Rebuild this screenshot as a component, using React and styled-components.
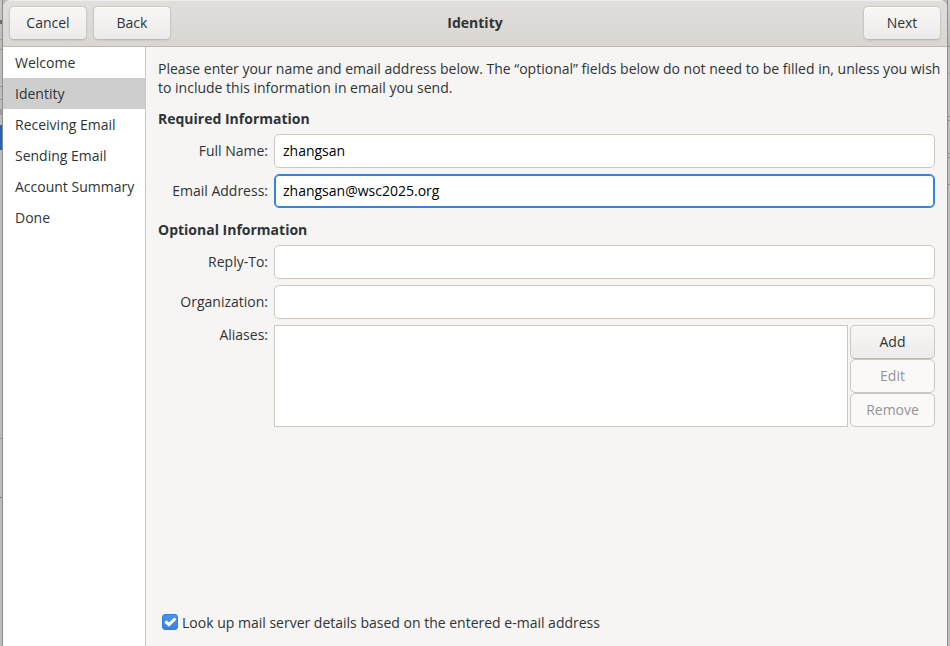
import React, { useState } from "react";
import styled, { createGlobalStyle, css } from "styled-components";

const GlobalStyle = createGlobalStyle`
  *, *::before, *::after { box-sizing: border-box; }
  body {
    margin: 0;
    color: #2e3436;
    font: 14px/19px "Open Sans", "Noto Sans", sans-serif;
  }
  button, input, textarea { font: inherit; color: inherit; }
`;

const Desktop = styled.div`
  display: grid;
  grid-template-columns: 3px minmax(0, 1fr) 3px;
  min-height: 100vh;
  background: #bdbcba;
`;

const mark = (y, color, h = 1) =>
  `linear-gradient(${color}, ${color}) 0 ${y}px / 100% ${h}px no-repeat`;

const LeftEdge = styled.div`
  background:
    linear-gradient(90deg, transparent 2px, #8f8e8d 2px),
    ${mark(20, "#6d6d6c", 4)},
    ${mark(39, "#a5a4a2")},
    ${mark(49, "#8e8d8b")},
    ${mark(86, "#9c9b99")},
    ${mark(99, "#9c9b99")},
    ${mark(109, "#9c9b99", 6)},
    ${mark(125, "#2263b5", 25)},
    ${mark(438, "#969593")},
    ${mark(497, "#7f7e7d")},
    linear-gradient(#c8c7c6, #bdbcbb 40px);
`;

const RightEdge = styled.div`
  background:
    linear-gradient(90deg, #8f8e8d 1px, transparent 1px),
    ${mark(46, "#969593")},
    ${mark(73, "#a3a2a0")},
    ${mark(116, "#8e8d8b")},
    ${mark(120, "#8e8d8b")},
    ${mark(153, "#8e8d8b")},
    ${mark(157, "#8e8d8b")},
    ${mark(184, "#8e8d8b")},
    linear-gradient(#d0cfce, #bdbcbb 40px);
`;

const Window = styled.div`
  display: flex;
  flex-direction: column;
  background: #f6f5f4;
  border-radius: 8px 8px 0 0;
  overflow: hidden;
`;

const HeaderBar = styled.header`
  display: grid;
  grid-template-columns: 1fr auto 1fr;
  align-items: center;
  height: 47px;
  padding: 0 6px;
  border-bottom: 1px solid #bfb8b1;
  background: linear-gradient(#e1dedb, #dad6d2);
  box-shadow: inset 0 1px #f0eeec;
`;

const HeaderActions = styled.div`
  display: flex;
  gap: 6px;
  justify-content: ${(p) => (p.$end ? "flex-end" : "flex-start")};
`;

const Title = styled.h1`
  margin: 0;
  padding-bottom: 2px;
  font-size: 14px;
  font-weight: 700;
`;

const Button = styled.button`
  height: 34px;
  padding: 0 8px 2px;
  border: 1px solid #cdc7c2;
  border-bottom-color: #bfb8b1;
  border-radius: 5px;
  background: linear-gradient(#f6f5f4 20%, #edebe9);
  box-shadow: inset 0 1px #ffffff;

  &:disabled {
    color: #929595;
    border-color: #cdc7c2;
    background: #faf9f8;
    box-shadow: none;
  }
`;

const HeaderButton = styled(Button)`
  width: 78px;
  box-shadow: inset 0 1px #ffffff, 0 1px 2px rgba(0, 0, 0, 0.07);
`;

const Body = styled.div`
  flex: 1;
  display: grid;
  grid-template-columns: 143px minmax(0, 1fr);
`;

const Sidebar = styled.nav`
  background: #ffffff;
  border-right: 1px solid #cdc7c2;
`;

const Step = styled.a`
  display: block;
  padding: 6px 0 6px 12px;
  color: inherit;
  text-decoration: none;
  white-space: nowrap;
  ${(p) => p.$current && css`background: #cecece;`}
`;

const Page = styled.form`
  display: flex;
  flex-direction: column;
  gap: 12px;
  padding: 12px;
`;

const Intro = styled.p`
  margin: 0 -12px 0 0;
`;

const Section = styled.section`
  display: grid;
  grid-template-columns: 110px minmax(0, 1fr);
  gap: 6px;
  align-items: center;
`;

const SectionTitle = styled.h2`
  grid-column: 1 / -1;
  margin: 0;
  font-size: 14px;
  font-weight: 700;
`;

const Label = styled.label`
  padding-bottom: 2px;
  text-align: right;
  white-space: nowrap;
  ${(p) => p.$top && css`align-self: start;`}
`;

const TextField = styled.input`
  width: 100%;
  height: 34px;
  padding: 0 8px 2px;
  border: 1px solid #cdc7c2;
  border-radius: 5px;
  background: #ffffff;
  color: #000000;
  outline: none;
  ${(p) =>
    p.$active &&
    css`
      border-color: #3584e4;
      box-shadow: inset 0 0 0 1px #3584e4;
    `}
`;

const AliasEditor = styled.div`
  display: flex;
  gap: 2px;
`;

const AliasList = styled.textarea`
  flex: 1;
  min-width: 0;
  border: 1px solid #cdc7c2;
  border-radius: 0;
  background: #ffffff;
  resize: none;
  outline: none;
`;

const AliasActions = styled.div`
  display: flex;
  flex-direction: column;
  width: 85px;
`;

const LookupRow = styled.label`
  display: flex;
  align-items: center;
  gap: 4px;
  margin-top: auto;
  padding: 2px 4px;
`;

const CheckFrame = styled.span`
  display: grid;
  width: 16px;
  height: 16px;
  margin-bottom: 2px;

  > * { grid-area: 1 / 1; }
  svg { pointer-events: none; }
  input:not(:checked) + svg { display: none; }
`;

const CheckBox = styled.input`
  appearance: none;
  width: 16px;
  height: 16px;
  margin: 0;
  border: 1px solid #cdc7c2;
  border-radius: 3px;
  background: #ffffff;

  &:checked {
    border-color: #2f7fdf;
    background: linear-gradient(#4b92e7, #3584e4);
  }
`;

const steps = [
  "Welcome",
  "Identity",
  "Receiving Email",
  "Sending Email",
  "Account Summary",
  "Done",
];

export default function App() {
  const [lookup, setLookup] = useState(true);

  return (
    <>
      <GlobalStyle />
      <Desktop>
        <LeftEdge />
        <Window>
          <HeaderBar>
            <HeaderActions>
              <HeaderButton type="button">Cancel</HeaderButton>
              <HeaderButton type="button">Back</HeaderButton>
            </HeaderActions>
            <Title>Identity</Title>
            <HeaderActions $end>
              <HeaderButton type="submit" form="identity">Next</HeaderButton>
            </HeaderActions>
          </HeaderBar>
          <Body>
            <Sidebar>
              {steps.map((name) => (
                <Step key={name} href="#" $current={name === "Identity"}>
                  {name}
                </Step>
              ))}
            </Sidebar>
            <Page id="identity" onSubmit={(e) => e.preventDefault()}>
              <Intro>
                Please enter your name and email address below. The “optional”
                fields below do not need to be filled in, unless you wish to
                include this information in email you send.
              </Intro>
              <Section>
                <SectionTitle>Required Information</SectionTitle>
                <Label htmlFor="name">Full Name:</Label>
                <TextField id="name" defaultValue="zhangsan" />
                <Label htmlFor="email">Email Address:</Label>
                <TextField id="email" $active defaultValue="zhangsan@wsc2025.org" />
              </Section>
              <Section>
                <SectionTitle>Optional Information</SectionTitle>
                <Label htmlFor="reply">Reply-To:</Label>
                <TextField id="reply" />
                <Label htmlFor="org">Organization:</Label>
                <TextField id="org" />
                <Label htmlFor="aliases" $top>Aliases:</Label>
                <AliasEditor>
                  <AliasList id="aliases" />
                  <AliasActions>
                    <Button type="button">Add</Button>
                    <Button type="button" disabled>Edit</Button>
                    <Button type="button" disabled>Remove</Button>
                  </AliasActions>
                </AliasEditor>
              </Section>
              <LookupRow>
                <CheckFrame>
                  <CheckBox
                    type="checkbox"
                    checked={lookup}
                    onChange={(e) => setLookup(e.target.checked)}
                  />
                  <svg width="16" height="16" viewBox="0 0 16 16" aria-hidden="true">
                    <path d="M3.4 7.4 6.9 10.7 13.4 4.5" fill="none" stroke="#fff" strokeWidth="3" />
                  </svg>
                </CheckFrame>
                Look up mail server details based on the entered e-mail address
              </LookupRow>
            </Page>
          </Body>
        </Window>
        <RightEdge />
      </Desktop>
    </>
  );
}
